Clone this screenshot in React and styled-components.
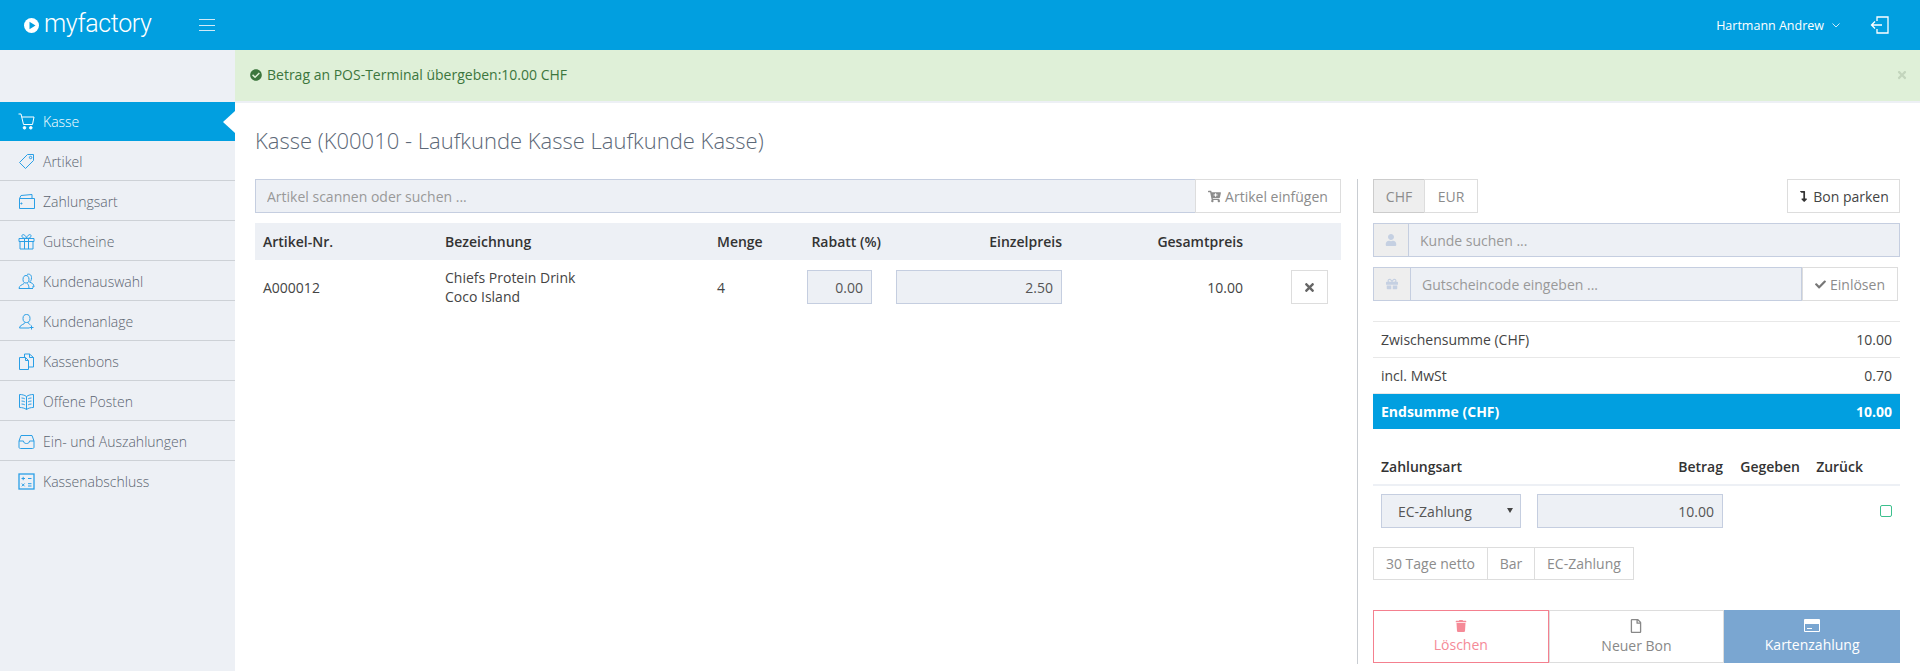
import React from "react";
import styled, { createGlobalStyle } from "styled-components";
import { FaCheckCircle, FaCartPlus, FaUser, FaGift, FaCheck, FaTimes, FaLevelDownAlt, FaTrash, FaRegFile } from "react-icons/fa";

const GlobalStyle = createGlobalStyle`
    html, body {
        margin: 0;
        padding: 0;
        background: #fff;
        overflow: hidden;
    }
    * {
        box-sizing: border-box;
    }
    body {
        font-family: "Open Sans", "Liberation Sans", sans-serif;
        font-size: 14px;
        color: #444;
    }
`

const Page = styled.div`
    width: 1920px;
    height: 671px;
    overflow: hidden;
`

const Topbar = styled.header`
    height: 50px;
    background: #019fe0;
    display: flex;
    align-items: center;
    color: #fff;
`

const Logo = styled.div`
    display: flex;
    align-items: center;
    gap: 5px;
    width: 199px;
    padding-left: 24px;
    span {
        font-family: "Roboto", sans-serif;
        font-weight: 300;
        font-size: 25px;
        letter-spacing: -0.4px;
        line-height: 50px;
        margin-top: -3px;
    }
`

const Burger = styled.button`
    width: 16px;
    height: 12px;
    padding: 0;
    background: none;
    border: none;
    border-top: 1px solid #cfeaf8;
    border-bottom: 1px solid #cfeaf8;
    display: flex;
    align-items: center;
    span {
        display: block;
        width: 100%;
        height: 1px;
        background: #cfeaf8;
    }
`

const UserBox = styled.div`
    margin-left: auto;
    display: flex;
    align-items: center;
    padding-right: 31px;
    font-size: 12.5px;
    .user-name {
        margin-right: 8px;
    }
    .user-caret {
        margin-right: 30px;
    }
`

const Layout = styled.div`
    display: grid;
    grid-template-columns: 235px 1fr;
    height: 621px;
`

const Sidebar = styled.nav`
    background: #edf0f5;
    padding-top: 52px;
`

const NavItem = styled.a`
    position: relative;
    display: flex;
    align-items: center;
    gap: 8px;
    padding-left: 18px;
    padding-top: ${p => p.$active ? 0 : 1}px;
    height: ${p => p.$active ? "39px" : "40px"};
    font-weight: 300;
    font-size: 14px;
    color: ${p => p.$active ? "#fff" : "#5b6470"};
    background: ${p => p.$active ? "#019fe0" : "transparent"};
    border-bottom: ${p => p.$active || p.$last ? "none" : "1px solid #cdd1d6"};
    svg {
        color: ${p => p.$active ? "#fff" : "#2a9fe6"};
        flex: none;
    }
    ${p => p.$active && `
        &::after {
            content: "";
            position: absolute;
            right: 0;
            top: 9px;
            border-style: solid;
            border-width: 11px 12px 11px 0;
            border-color: transparent #fff transparent transparent;
        }
    `}
`

const Main = styled.main`
    min-width: 0;
`

const Alert = styled.div`
    height: 53px;
    padding: 0 12px 2px 15px;
    display: flex;
    align-items: center;
    gap: 5px;
    background: #dff0d8;
    border-bottom: 2px solid #edf0f5;
    color: #3c763d;
    svg {
        flex: none;
    }
    .alert-close {
        margin-left: auto;
        color: #c3d5bd;
        font-size: 12px;
        display: flex;
    }
`

const Content = styled.div`
    padding: 21px 20px 0;
`

const Title = styled.h1`
    margin: 0 0 22px;
    font-size: 22px;
    line-height: 33px;
    font-weight: 300;
    color: #5c6877;
`

const Columns = styled.div`
    display: flex;
    height: 485px;
`

const LeftCol = styled.section`
    width: 1103px;
    padding-right: 16px;
    border-right: 1px solid #c9cdd2;
`

const RightCol = styled.aside`
    width: 527px;
    margin-left: 15px;
    display: flex;
    flex-direction: column;
`

const InputGroup = styled.div`
    display: flex;
    height: 34px;
    margin-bottom: ${p => p.$gap || 10}px;
`

const Field = styled.input`
    flex: 1;
    min-width: 0;
    width: ${p => p.$width || "auto"};
    height: 34px;
    padding: 0 11px;
    background: #edf0f5;
    border: 1px solid #c5cee0;
    font: inherit;
    color: #555;
    text-align: ${p => p.$right ? "right" : "left"};
    outline: none;
    &::placeholder {
        color: #999;
        opacity: 1;
    }
`

const Addon = styled.div`
    flex: none;
    width: ${p => p.$width}px;
    display: flex;
    align-items: center;
    justify-content: center;
    background: #eee;
    border: 1px solid #c5cee0;
    border-right: none;
    color: #c5d0e2;
`

const Button = styled.button`
    flex: none;
    height: ${p => p.$height || 34}px;
    width: ${p => p.$width ? p.$width + "px" : "auto"};
    margin-left: ${p => p.$push ? "auto" : p.$joined ? "-1px" : "0"};
    padding: 0;
    display: inline-flex;
    align-items: center;
    justify-content: center;
    gap: 4px;
    background: ${p => p.$on ? "#eee" : "#fff"};
    border: 1px solid ${p => p.$on ? "#ccc" : "#ddd"};
    font: inherit;
    color: ${p => p.$dark ? "#444" : "#8c8c8c"};
`

const Table = styled.div`
    width: 1086px;
`

const TableRow = styled.div`
    display: grid;
    grid-template-columns: 182px 272px 90px 82px 181px 181px 98px;
    align-items: center;
    min-height: ${p => p.$head ? 37 : 54}px;
    background: ${p => p.$head ? "#edf0f5" : "#fff"};
    font-weight: ${p => p.$head ? 600 : 400};
    color: ${p => p.$head ? "#333" : "#444"};
`

const Cell = styled.div`
    padding-left: ${p => p.$first ? 8 : 0}px;
    text-align: ${p => p.$right ? "right" : "left"};
    line-height: 19px;
    display: ${p => p.$flexEnd ? "flex" : "block"};
    justify-content: flex-end;
`

const CellInput = styled(Field)`
    flex: none;
    display: block;
    padding: 0 8px;
    width: ${p => p.$width}px;
    margin-left: ${p => p.$left || 0}px;
`

const Totals = styled.div`
    border-top: 1px solid #e8e8e8;
`

const TotalRow = styled.div`
    display: flex;
    justify-content: space-between;
    align-items: center;
    height: ${p => p.$strong ? 35 : 36}px;
    padding: 0 8px;
    border-bottom: ${p => p.$strong ? "none" : "1px solid #e8e8e8"};
    background: ${p => p.$strong ? "#019fe0" : "#fff"};
    color: ${p => p.$strong ? "#fff" : "#444"};
    font-weight: ${p => p.$strong ? 700 : 400};
`

const PayGrid = styled.div`
    display: grid;
    grid-template-columns: 156px 186px 77px 63px 1fr;
    align-items: center;
    padding-left: 8px;
`

const PayHead = styled(PayGrid)`
    height: 57px;
    align-items: end;
    padding-bottom: 7px;
    border-bottom: 2px solid #edf0f5;
    line-height: 20px;
    font-weight: 600;
    color: #333;
    div:not(:first-child) {
        text-align: right;
    }
`

const PayRow = styled(PayGrid)`
    margin-top: 8px;
    margin-bottom: 19px;
`

const SelectBox = styled.div`
    width: 140px;
    height: 34px;
    padding: 0 7px 0 16px;
    display: flex;
    align-items: center;
    justify-content: space-between;
    background: #edf0f5;
    border: 1px solid #c5cee0;
    color: #555;
    &::after {
        content: "";
        margin-top: -2px;
        border-style: solid;
        border-width: 5px 3.5px 0;
        border-color: #444 transparent transparent;
    }
`

const CheckBox = styled.span`
    justify-self: end;
    margin-right: 8px;
    width: 12px;
    height: 12px;
    border: 1px solid #3cc08e;
    border-radius: 2px;
`

const QuickRow = styled.div`
    display: flex;
`

const Actions = styled.div`
    margin-top: 30px;
    display: grid;
    grid-template-columns: repeat(3, 1fr);
    height: 53px;
`

const ActionButton = styled.button`
    display: flex;
    flex-direction: column;
    align-items: center;
    justify-content: center;
    gap: 3px;
    padding: 0;
    font: inherit;
    background: ${p => p.$tone === "primary" ? "#7aa6d1" : "#fff"};
    color: ${p => p.$tone === "danger" ? "#f58a97" : p.$tone === "primary" ? "#fff" : "#888"};
    border: 1px solid ${p => p.$tone === "danger" ? "#f4808f" : p.$tone === "primary" ? "#7aa6d1" : "#ddd"};
    line-height: 19px;
`

const Line = ({ children, size = 17 }) => (
    <svg width={size} height={size} viewBox="0 0 17 17" fill="none" stroke="currentColor" strokeWidth="1">
        {children}
    </svg>
)

const icons = {
    cart: <Line><path d="M0.5 1H3l2.5 10.5h9L16 4H3.8" /><circle cx="6.5" cy="14.8" r="1.3" fill="currentColor" /><circle cx="12.8" cy="14.8" r="1.3" fill="currentColor" /></Line>,
    tag: <Line><path d="M9.5 1.5h6v6L7.5 15.5l-6-6z" /><circle cx="12.6" cy="4.5" r="1.2" /></Line>,
    wallet: <Line><path d="M1.5 5.5h15v10h-15zM1.5 5.5L3 2.5l11-1v4" /><circle cx="3.4" cy="10.5" r=".6" fill="currentColor" /></Line>,
    gift: <Line><path d="M1 5.5h15v3H1zM2 8.5v7.500h13V8.500M6.500 5.500V16M10.500 5.500V16M8.500 5.500C6 5.500 3.500 4.500 4 2.500S8 2 8.500 5.500zM8.500 5.500C11 5.500 13.500 4.500 13 2.500S9 2 8.500 5.500z" /></Line>,
    users: <Line><path d="M5 6.500C5 3.500 6.500 2.500 8 2.500S11 3.500 11 6.500 9.500 10 8 10 5 9.500 5 6.500zM1 15.500c0-3 3-3.500 5-5M15 15.500H1M11 15.500c0-3-1-4-1.500-5M9 1.500C11 .5 13.500 1.500 13.500 4.500S12.500 8.500 11.500 9c2 1 4.500 1.500 4.500 5h-2" /></Line>,
    userPlus: <Line><path d="M5 5.500C5 2.500 6.500 1.500 8.500 1.500S12 2.500 12 5.500 10.500 9.500 8.500 9.500 5 8.500 5 5.500zM7 9.500c0 2-5.500 2-5.500 5.500h10M10 9.500c0 1 1.500 1.500 2.500 2.500M13.500 12.500v4M11.500 14.500h4" /></Line>,
    docs: <Line><path d="M1.500 4.500h6l3 3v9h-9zM7.500 4.500v3h3M6.500 4.500V1h5l4 3.500v9.500h-5M11.500 1v3.500h4" /></Line>,
    book: <Line><path d="M8.500 3.500C6.500 2 4 1.500 1.500 1.500v13c2.500 0 5 .5 7 2 2-1.500 4.500-2 7-2v-13c-2.500 0-5 .5-7 2zM8.500 3.500v13M3.500 5c1.200 0 2.300.3 3.300.8M3.500 8c1.200 0 2.300.3 3.300.8M3.500 11c1.200 0 2.300.3 3.300.8M13.500 5c-1.200 0-2.300.3-3.300.8M13.500 8c-1.200 0-2.300.3-3.300.8M13.500 11c-1.200 0-2.300.3-3.300.8" /></Line>,
    inbox: <Line><path d="M1 8V14c0 1 .5 1.500 1.500 1.500h12c1 0 1.500-.5 1.500-1.500V8L14 2.500H3zM1 8h4.500c0 1.500 1 2.500 3 2.500s3-1 3-2.500H16" /></Line>,
    calc: <Line><rect x="1" y="1" width="15" height="15" strokeWidth="1.300" /><path d="M3.500 5.500h3.500M5.200 3.800v3.400M10 5.500h3.500M3.800 10.500l2.800 2.800M6.600 10.500l-2.800 2.800M10 10.700h3.500M10 13h3.500" /></Line>
}

const menu = [
    ["Kasse", "cart"],
    ["Artikel", "tag"],
    ["Zahlungsart", "wallet"],
    ["Gutscheine", "gift"],
    ["Kundenauswahl", "users"],
    ["Kundenanlage", "userPlus"],
    ["Kassenbons", "docs"],
    ["Offene Posten", "book"],
    ["Ein- und Auszahlungen", "inbox"],
    ["Kassenabschluss", "calc"],
]

const App = () => {
    return <Page>
        <GlobalStyle />
        <Topbar>
            <Logo>
                <svg width="15" height="15" viewBox="0 0 15 15">
                    <circle cx="7.5" cy="7.5" r="7.500" fill="#fff" />
                    <path d="M5.500 3.800l6 3.700-6 3.700z" fill="#019fe0" />
                </svg>
                <span>myfactory</span>
            </Logo>
            <Burger aria-label="Menü"><span /></Burger>
            <UserBox>
                <span className="user-name">Hartmann Andrew</span>
                <svg className="user-caret" width="8" height="5" viewBox="0 0 8 5" fill="none" stroke="#cfeaf8">
                    <path d="M.5.500L4 4 7.500.500" />
                </svg>
                <svg width="19" height="18" viewBox="0 0 19 18" fill="none" stroke="#fff" strokeWidth="1.300">
                    <path d="M7 5V1h11v16H7v-4M1.500 9H12M5 5.500L1.500 9 5 12.500" />
                </svg>
            </UserBox>
        </Topbar>
        <Layout>
            <Sidebar>
                {menu.map(([label, icon], index) => (
                    <NavItem key={label} $active={index === 0} $last={index === menu.length - 1}>
                        {icons[icon]}
                        {label}
                    </NavItem>
                ))}
            </Sidebar>
            <Main>
                <Alert>
                    <FaCheckCircle size={12} />
                    Betrag an POS-Terminal übergeben:10.00 CHF
                    <span className="alert-close"><FaTimes /></span>
                </Alert>
                <Content>
                    <Title>Kasse (K00010 - Laufkunde Kasse Laufkunde Kasse)</Title>
                    <Columns>
                        <LeftCol>
                            <InputGroup>
                                <Field placeholder="Artikel scannen oder suchen ..." />
                                <Button $width={146} $joined><FaCartPlus size={13} /> Artikel einfügen</Button>
                            </InputGroup>
                            <Table>
                                <TableRow $head>
                                    <Cell $first>Artikel-Nr.</Cell>
                                    <Cell $first>Bezeichnung</Cell>
                                    <Cell $first>Menge</Cell>
                                    <Cell $right>Rabatt (%)</Cell>
                                    <Cell $right>Einzelpreis</Cell>
                                    <Cell $right>Gesamtpreis</Cell>
                                    <Cell />
                                </TableRow>
                                <TableRow>
                                    <Cell $first>A000012</Cell>
                                    <Cell $first>Chiefs Protein Drink<br />Coco Island</Cell>
                                    <Cell $first>4</Cell>
                                    <Cell><CellInput $right $width={65} $left={8} readOnly value="0.00" /></Cell>
                                    <Cell $flexEnd><CellInput $right $width={166} readOnly value="2.50" /></Cell>
                                    <Cell $right>10.00</Cell>
                                    <Cell $flexEnd>
                                        <Button $width={37} $dark style={{ marginRight: 13 }} aria-label="Entfernen"><FaTimes size={13} color="#666" /></Button>
                                    </Cell>
                                </TableRow>
                            </Table>
                        </LeftCol>
                        <RightCol>
                            <InputGroup>
                                <Button $width={52} $on>CHF</Button>
                                <Button $width={54} $joined>EUR</Button>
                                <Button $width={113} $push $dark><FaLevelDownAlt size={11} color="#333" /> Bon parken</Button>
                            </InputGroup>
                            <InputGroup>
                                <Addon $width={35}><FaUser size={12} /></Addon>
                                <Field placeholder="Kunde suchen ..." />
                            </InputGroup>
                            <InputGroup $gap={20}>
                                <Addon $width={37}><FaGift size={12} /></Addon>
                                <Field placeholder="Gutscheincode eingeben ..." />
                                <Button $width={96} style={{ marginRight: 2 }}><FaCheck size={11} color="#777" /> Einlösen</Button>
                            </InputGroup>
                            <Totals>
                                <TotalRow><span>Zwischensumme (CHF)</span><span>10.00</span></TotalRow>
                                <TotalRow><span>incl. MwSt</span><span>0.70</span></TotalRow>
                                <TotalRow $strong><span>Endsumme (CHF)</span><span>10.00</span></TotalRow>
                            </Totals>
                            <PayHead>
                                <div>Zahlungsart</div>
                                <div>Betrag</div>
                                <div>Gegeben</div>
                                <div>Zurück</div>
                            </PayHead>
                            <PayRow>
                                <SelectBox>EC-Zahlung</SelectBox>
                                <CellInput $right $width={186} readOnly value="10.00" />
                                <span />
                                <span />
                                <CheckBox />
                            </PayRow>
                            <QuickRow>
                                <Button $width={115} $height={33}>30 Tage netto</Button>
                                <Button $width={48} $height={33} $joined>Bar</Button>
                                <Button $width={100} $height={33} $joined>EC-Zahlung</Button>
                            </QuickRow>
                            <Actions>
                                <ActionButton $tone="danger"><FaTrash size={12} />Löschen</ActionButton>
                                <ActionButton><FaRegFile size={14} />Neuer Bon</ActionButton>
                                <ActionButton $tone="primary">
                                    <svg width="16" height="13" viewBox="0 0 16 13">
                                        <path fillRule="evenodd" fill="#fff" d="M1 0h14a1 1 0 0 1 1 1v11a1 1 0 0 1-1 1H1a1 1 0 0 1-1-1V1a1 1 0 0 1 1-1zM1 5v7h14V5z" />
                                        <path fill="#fff" d="M3 9h5v1H3z" />
                                    </svg>
                                    Kartenzahlung
                                </ActionButton>
                            </Actions>
                        </RightCol>
                    </Columns>
                </Content>
            </Main>
        </Layout>
    </Page>
}

export default App;
